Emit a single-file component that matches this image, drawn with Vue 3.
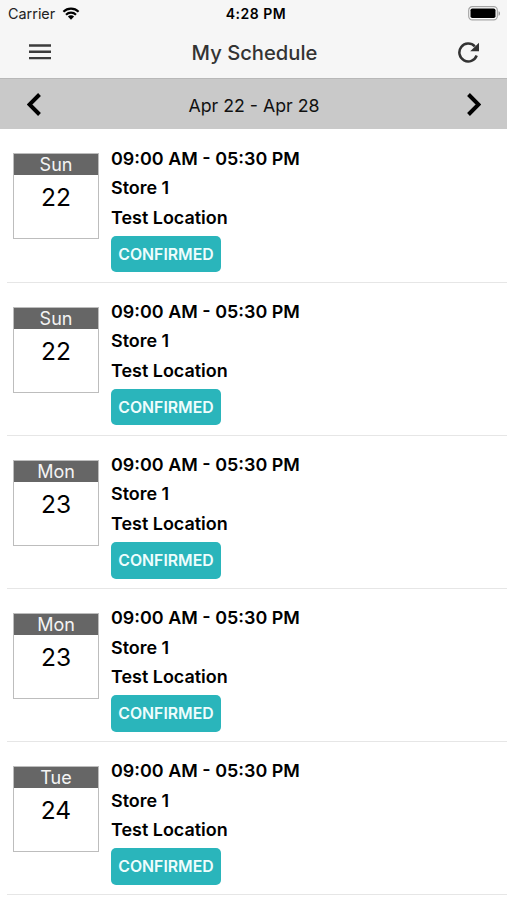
<template>
  <div class="schedule-page">
    <!-- Status Bar -->
    <div class="status-bar">
      <div class="carrier">
        <span>Carrier</span>
        <svg class="wifi-icon" viewBox="0 0 18 13">
          <path d="M1.4 4.8a10.8 10.8 0 0 1 15.2 0M4 7.7a7.1 7.1 0 0 1 10 0" fill="none" stroke="#000" stroke-width="2.1" />
          <path d="M5.9 9.6a4.4 4.4 0 0 1 6.2 0L9 12.7z" fill="#000" />
        </svg>
      </div>
      <span class="clock">4:28 PM</span>
      <div class="battery">
        <svg class="battery-icon" viewBox="0 0 33 15">
          <rect x="0.7" y="0.7" width="28.6" height="13.2" rx="3.6" fill="#fff" stroke="#a5a5a5" stroke-width="1.2" />
          <rect x="2.5" y="2.5" width="25" height="9.6" rx="1.8" fill="#000" />
          <path d="M30.6 5.2c1.7.5 1.7 4 0 4.5z" fill="#888" />
        </svg>
      </div>
    </div>

    <!-- Nav Bar -->
    <header class="nav-bar">
      <button class="icon-btn" aria-label="Menu">
        <svg class="menu-icon" viewBox="0 0 22 16">
          <path d="M0 1.5h22M0 7.8h22M0 14.1h22" fill="none" stroke="#3c3c3c" stroke-width="2.4" />
        </svg>
      </button>
      <h1 class="nav-title">My Schedule</h1>
      <button class="icon-btn" aria-label="Refresh">
        <svg class="refresh-icon" viewBox="0 0 20 20">
          <path d="M17.8 12.9A8.5 8.5 0 1 1 16 4.2" fill="none" stroke="#333" stroke-width="2.4" />
          <path d="M20 0.6V8.8H11.6z" fill="#333" />
        </svg>
      </button>
    </header>

    <!-- Week Selector -->
    <div class="week-bar">
      <button class="icon-btn" aria-label="Previous week">
        <svg class="arrow-icon" viewBox="0 0 14 23">
          <path d="M12.5 1.5L2.5 11.5L12.5 21.5" fill="none" stroke="#000" stroke-width="4" />
        </svg>
      </button>
      <span class="week-range">Apr 22 - Apr 28</span>
      <button class="icon-btn" aria-label="Next week">
        <svg class="arrow-icon" viewBox="0 0 14 23">
          <path d="M1.5 1.5L11.5 11.5L1.5 21.5" fill="none" stroke="#000" stroke-width="4" />
        </svg>
      </button>
    </div>

    <!-- Shifts -->
    <div class="shift-list">
      <div class="shift" v-for="shift in shifts" :key="shift.id">
        <div class="date-box">
          <div class="date-day">{{ shift.day }}</div>
          <div class="date-number">{{ shift.date }}</div>
        </div>
        <div class="shift-details">
          <p class="shift-line">{{ shift.time }}</p>
          <p class="shift-line">{{ shift.store }}</p>
          <p class="shift-line">{{ shift.location }}</p>
          <span class="status">{{ shift.status }}</span>
        </div>
      </div>
    </div>
  </div>
</template>

<script setup>
import { ref } from 'vue'

const days = [
  ['Sun', 22],
  ['Sun', 22],
  ['Mon', 23],
  ['Mon', 23],
  ['Tue', 24]
]

const shifts = ref(days.map(([day, date], index) => ({
  id: index + 1,
  day,
  date,
  time: '09:00 AM - 05:30 PM',
  store: 'Store 1',
  location: 'Test Location',
  status: 'CONFIRMED'
})))
</script>

<style>
body {
  margin: 0;
  background-color: #fff;
}
</style>

<style scoped>
* {
  margin: 0;
  padding: 0;
  box-sizing: border-box;
}

.schedule-page {
  height: 900px;
  overflow: hidden;
  background-color: #fff;
  font-family: Inter, "Liberation Sans", sans-serif;
  color: #000;
}

svg {
  display: block;
}

/* Status Bar */
.status-bar {
  display: grid;
  grid-template-columns: 1fr auto 1fr;
  align-items: center;
  height: 27px;
  padding: 0 6px 0 8px;
  background-color: #f6f6f6;
}

.carrier {
  display: flex;
  align-items: center;
  gap: 7px;
  font-size: 14.4px;
  color: #222;
}

.wifi-icon {
  width: 18px;
  height: 13px;
}

.clock {
  padding-left: 3px;
  font-size: 14px;
  font-weight: 600;
  letter-spacing: 0.5px;
}

.battery {
  display: flex;
  justify-content: flex-end;
}

.battery-icon {
  width: 33px;
  height: 15px;
}

/* Nav Bar */
.nav-bar {
  display: flex;
  align-items: center;
  justify-content: space-between;
  height: 52px;
  padding: 0 28px 1px 29px;
  background-color: #f6f6f6;
  border-bottom: 1px solid #b8b8b8;
}

.icon-btn {
  border: none;
  background-color: transparent;
  cursor: pointer;
}

.menu-icon {
  width: 22px;
  height: 16px;
}

.nav-title {
  font-size: 20.2px;
  font-weight: 500;
  color: #333;
}

.refresh-icon {
  width: 21px;
  height: 21px;
}

/* Week Selector */
.week-bar {
  display: flex;
  align-items: center;
  justify-content: space-between;
  height: 50px;
  padding: 1px 26px 0 27px;
  background-color: #c9c9c9;
}

.arrow-icon {
  width: 14px;
  height: 23px;
}

.week-range {
  padding-top: 1px;
  font-size: 17.75px;
  color: #111;
}

/* Shifts */
.shift-list {
  padding: 0.6px 0 0 7px;
}

.shift {
  display: flex;
  gap: 12px;
  height: 153.1px;
  padding: 14.4px 0 0 6px;
  border-bottom: 1px solid #e6e6e6;
}

.date-box {
  width: 86px;
  height: 86px;
  margin-top: 9.5px;
  border: 1.5px solid #bdbdbd;
  text-align: center;
}

.date-day {
  height: 21px;
  background-color: #666;
  font-size: 18px;
  line-height: 21px;
  color: #f4f4f4;
}

.date-number {
  font-size: 24.5px;
  line-height: 44px;
}

.shift-line {
  font-size: 17.95px;
  font-weight: 600;
  line-height: 29.3px;
}

.status {
  display: flex;
  align-items: center;
  justify-content: center;
  width: 110px;
  height: 36.5px;
  margin-top: 4px;
  border-radius: 5px;
  background-color: #2ab5bb;
  font-size: 15.8px;
  font-weight: 600;
  color: #effdfd;
}
</style>
